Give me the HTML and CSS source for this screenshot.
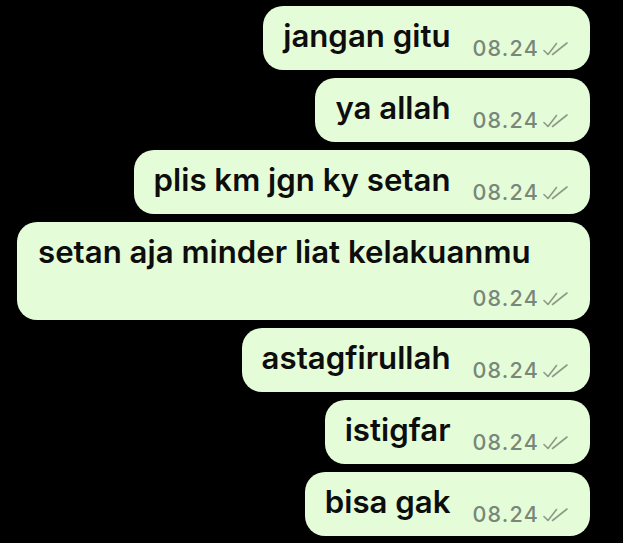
FILE: index.html
```html
<!DOCTYPE html>
<html>
<head>
<meta charset="utf-8">
<link rel="stylesheet" href="styles.css">
</head>
<body>
<div class="chat">
  <div class="bubble"><span class="text">jangan gitu</span><span class="meta">08.24<svg class="ticks" viewBox="0 0 25 14"><path d="M1 8.5 L5 12.5 L13.5 1.5 M9.5 12.5 L24 1"/></svg></span></div>
  <div class="bubble"><span class="text">ya allah</span><span class="meta">08.24<svg class="ticks" viewBox="0 0 25 14"><path d="M1 8.5 L5 12.5 L13.5 1.5 M9.5 12.5 L24 1"/></svg></span></div>
  <div class="bubble"><span class="text">plis km jgn ky setan</span><span class="meta">08.24<svg class="ticks" viewBox="0 0 25 14"><path d="M1 8.5 L5 12.5 L13.5 1.5 M9.5 12.5 L24 1"/></svg></span></div>
  <div class="bubble wide"><span class="text">setan aja minder liat kelakuanmu</span><span class="meta">08.24<svg class="ticks" viewBox="0 0 25 14"><path d="M1 8.5 L5 12.5 L13.5 1.5 M9.5 12.5 L24 1"/></svg></span></div>
  <div class="bubble"><span class="text">astagfirullah</span><span class="meta">08.24<svg class="ticks" viewBox="0 0 25 14"><path d="M1 8.5 L5 12.5 L13.5 1.5 M9.5 12.5 L24 1"/></svg></span></div>
  <div class="bubble"><span class="text">istigfar</span><span class="meta">08.24<svg class="ticks" viewBox="0 0 25 14"><path d="M1 8.5 L5 12.5 L13.5 1.5 M9.5 12.5 L24 1"/></svg></span></div>
  <div class="bubble"><span class="text">bisa gak</span><span class="meta">08.24<svg class="ticks" viewBox="0 0 25 14"><path d="M1 8.5 L5 12.5 L13.5 1.5 M9.5 12.5 L24 1"/></svg></span></div>
</div>
</body>
</html>
```
FILE: styles.css
```css
html, body {
  margin: 0;
  padding: 0;
  background: #000;
}
.chat {
  width: 623px;
  height: 543px;
  box-sizing: border-box;
  padding: 6px 33px 0 17px;
  display: flex;
  flex-direction: column;
  align-items: flex-end;
  gap: 8px;
  overflow: hidden;
}
.bubble {
  background: #e5fcd8;
  border-radius: 20px;
  display: flex;
  flex-wrap: wrap;
  align-items: flex-end;
  column-gap: 22px;
  padding: 0 22px 0 20px;
  max-width: 100%;
  box-sizing: border-box;
}
.wide {
  padding-left: 21px;
}
.text {
  font-family: Inter, "Liberation Sans", sans-serif;
  font-weight: 600;
  font-size: 31.2px;
  line-height: 34px;
  color: #0d0d0d;
  padding: 13px 0 17px;
  white-space: nowrap;
}
.meta {
  font-family: Inter, "Liberation Sans", sans-serif;
  font-weight: 500;
  font-size: 21.5px;
  line-height: 24px;
  color: #78877a;
  margin-left: auto;
  margin-bottom: 10px;
  display: flex;
  align-items: center;
  gap: 4px;
  letter-spacing: 1.2px;
}
.ticks {
  width: 25px;
  height: 14px;
  margin-top: 2px;
  fill: none;
  stroke: #8c9b88;
  stroke-width: 1.6;
  stroke-linecap: round;
  stroke-linejoin: round;
}
```
